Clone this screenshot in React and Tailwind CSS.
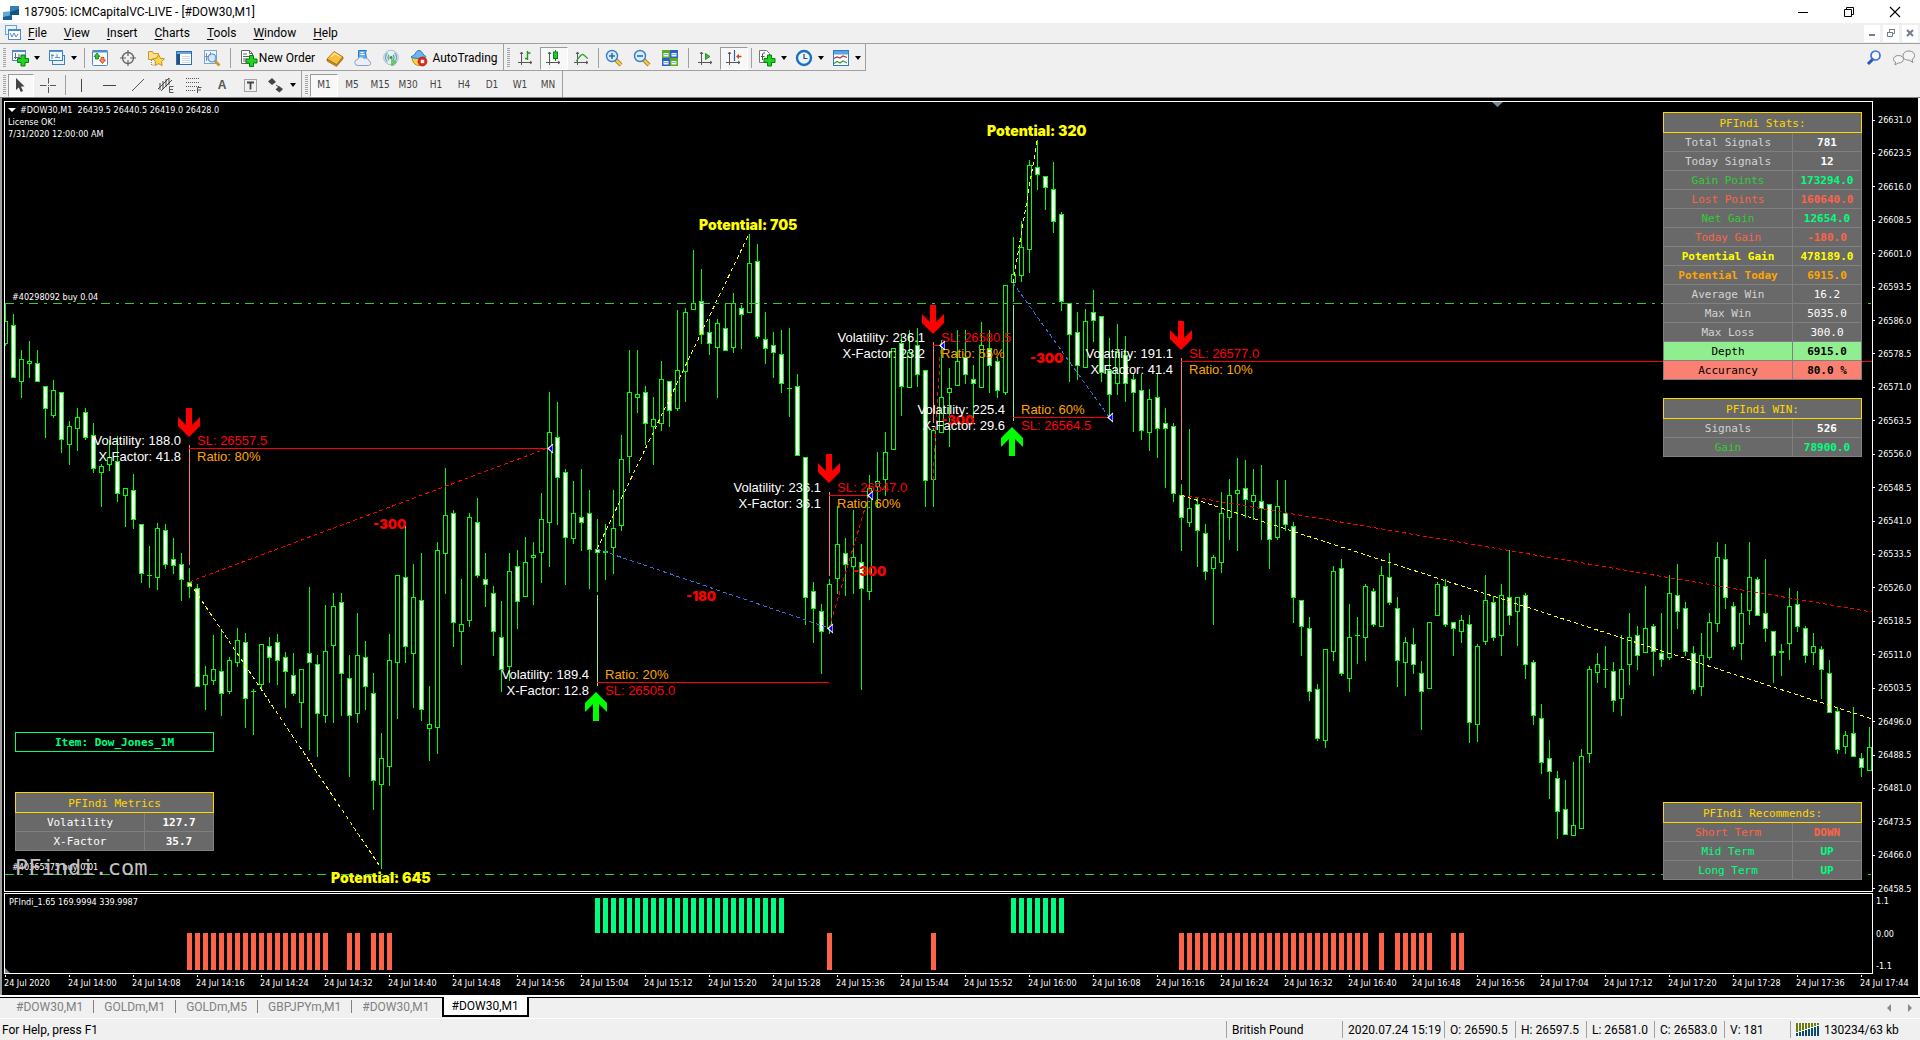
import React from 'react';

/* ---------- market data: [filled, high, bodyTop, bodyBottom, low] in plot rows ---------- */

const FIRST_X = 5;
const STEP = 8;

const CANDLES = [
  [0,303,321,344,346],[1,314,325,378,378],[0,350,359,382,398],[0,341,361,364,378],[1,350,363,382,382],
  [1,386,386,409,438],[0,380,390,416,418],[1,392,392,440,453],[0,421,426,445,465],[0,408,417,429,451],
  [1,408,412,438,440],[1,423,435,469,473],[0,464,466,473,507],[0,440,457,465,471],[1,436,461,494,502],
  [0,488,488,496,527],[1,474,490,520,529],[1,524,524,574,583],[0,546,575,575,587],[0,523,528,578,590],
  [1,524,530,565,569],[1,538,559,566,574],[1,553,564,580,601],[1,568,582,587,598],[1,584,588,687,687],
  [0,666,675,685,710],[0,635,669,681,685],[1,630,671,694,716],[0,657,660,692,694],[0,628,640,663,667],
  [1,633,642,699,728],[0,689,691,691,734],[0,644,644,685,690],[1,637,646,658,683],[1,634,642,661,685],
  [1,652,657,672,708],[1,653,675,694,696],[0,669,669,703,728],[1,587,653,663,750],[1,655,664,714,757],
  [0,605,651,716,723],[0,593,606,646,723],[1,593,602,674,716],[1,655,678,716,777],[0,613,655,714,723],
  [1,641,657,687,710],[1,673,693,781,810],[0,733,758,785,869],[0,634,660,767,786],[0,575,575,663,719],
  [1,526,577,647,663],[0,564,597,654,708],[1,553,600,710,721],[0,686,724,729,761],[0,542,550,728,754],
  [0,468,515,554,594],[1,510,513,623,647],[0,579,624,632,665],[0,513,517,621,627],[1,498,522,576,578],
  [1,553,579,585,607],[1,586,593,632,656],[1,601,637,670,692],[0,553,571,667,681],[1,550,566,602,629],
  [0,537,562,597,597],[0,542,555,558,605],[0,493,519,553,583],[0,392,432,523,567],[1,402,437,478,525],
  [1,469,472,538,585],[0,481,513,539,544],[1,469,517,523,551],[1,490,513,550,589],[1,519,549,553,592],
  [1,524,551,553,580],[0,490,528,548,574],[0,435,459,526,531],[0,350,392,457,473],[0,350,394,398,413],
  [1,386,392,424,445],[0,397,419,427,465],[0,361,379,424,431],[1,381,381,411,427],[0,310,370,409,411],
  [0,308,312,372,402],[0,250,303,310,310],[1,269,301,335,344],[1,319,332,344,355],[0,319,323,348,398],
  [1,303,328,351,351],[0,293,303,348,353],[1,305,308,315,349],[0,234,263,313,313],[1,244,261,337,339],
  [1,312,339,349,364],[1,332,345,353,378],[1,330,354,384,393],[0,328,388,388,416],[1,374,386,456,456],
  [1,457,457,598,625],[1,582,591,609,643],[1,604,611,632,674],[0,579,584,629,634],[0,506,544,579,594],
  [1,538,553,565,596],[0,510,557,567,594],[1,544,562,589,690],[0,475,488,592,600],[0,452,481,487,508],
  [0,432,452,480,496],[0,348,348,450,450],[1,335,343,387,416],[0,330,352,388,388],[1,328,345,375,387],
  [1,370,370,481,507],[0,428,430,480,507],[0,340,397,433,433],[0,368,388,393,447],[0,330,361,386,386],
  [1,330,357,375,384],[1,365,379,384,418],[0,322,345,388,388],[1,330,348,366,393],[1,357,361,391,398],
  [0,285,285,393,395],[0,237,274,283,302],[0,221,247,276,282],[0,160,165,250,273],[1,140,167,175,190],
  [1,176,176,188,210],[1,162,189,222,233],[1,212,214,302,311],[1,303,303,335,382],[1,312,332,366,380],
  [0,309,321,368,368],[1,290,312,321,342],[1,316,316,373,382],[1,338,370,395,417],[0,324,352,384,395],
  [1,336,355,384,402],[1,373,379,393,432],[1,374,390,431,440],[0,389,399,433,451],[1,373,397,429,458],
  [1,408,423,429,488],[1,423,426,494,502],[1,484,495,518,551],[0,429,508,523,527],[1,498,504,531,567],
  [1,524,533,572,580],[0,555,557,569,625],[0,492,513,563,573],[0,479,495,518,540],[0,458,490,494,551],
  [1,460,488,500,518],[0,469,495,502,520],[1,465,501,509,540],[1,504,504,540,569],[0,480,506,538,540],
  [1,480,513,525,531],[1,522,526,598,623],[1,600,600,627,656],[1,617,628,692,701],[1,684,689,739,741],
  [0,649,649,741,748],[0,566,571,652,661],[1,559,568,674,676],[0,604,637,679,692],[0,617,635,635,663],
  [0,584,586,638,661],[1,588,591,625,627],[0,566,575,627,627],[1,553,577,603,605],[1,597,608,661,687],
  [0,637,642,663,696],[1,628,644,665,674],[1,661,673,692,730],[0,622,622,689,689],[0,582,584,616,616],
  [1,579,586,625,627],[1,622,622,629,656],[0,615,620,632,643],[1,615,624,723,743],[0,644,646,725,742],
  [0,575,600,642,645],[1,596,602,638,641],[0,584,595,636,656],[1,550,597,616,625],[0,597,597,612,646],
  [1,593,595,665,679],[1,660,662,716,725],[1,704,718,763,774],[1,740,758,772,799],[1,771,778,812,839],
  [1,780,809,835,835],[0,762,825,836,836],[0,749,756,829,829],[0,666,669,754,763],[0,653,664,673,683],
  [0,646,669,669,687],[1,662,671,701,712],[0,635,669,699,716],[0,613,637,665,685],[1,626,635,656,670],
  [0,586,628,653,653],[1,624,626,652,676],[1,613,653,660,667],[0,575,593,658,660],[1,564,595,612,629],
  [1,602,608,652,656],[1,646,653,690,694],[0,633,655,687,696],[0,613,622,658,660],[0,542,557,624,632],
  [1,544,559,598,609],[1,602,606,647,650],[0,593,613,644,660],[0,542,577,611,625],[1,577,579,616,616],
  [1,559,613,629,642],[1,631,631,656,683],[0,644,651,653,676],[0,588,606,644,660],[1,591,604,627,632],
  [1,626,628,656,663],[0,633,646,653,665],[1,646,649,670,699],[1,660,673,713,713],[1,707,711,750,754],
  [0,731,735,747,754],[1,707,733,757,757],[1,753,758,768,777],[0,727,747,771,771],
];

const BUY_RUNS = [[74, 97], [126, 132]];
const SELL_RUNS = [[23, 40], [43, 44], [46, 48], [103, 103], [116, 116], [147, 170], [172, 172], [174, 178], [181, 182]];

const SIGNALS = [
  { x: 189, top: 445, vol: '188.0', xf: '41.8', sl: '26557.5', ratio: '80%', stem: [445, 565], to: 548, line: 448, arrow: 408 },
  { x: 829, top: 492, vol: '236.1', xf: '36.1', sl: '26547.0', ratio: '60%', stem: [492, 576], to: 868, line: 495, arrow: 454 },
  { x: 933, top: 342, vol: '236.1', xf: '23.2', sl: '26580.5', ratio: '55%', stem: [342, 423], to: 940, line: 345, arrow: 305 },
  { x: 1181, top: 358, vol: '191.1', xf: '41.4', sl: '26577.0', ratio: '10%', stem: [358, 480], to: 1872, line: 361, arrow: 321 },
  { x: 1013, top: 414, vol: '225.4', xf: '29.6', sl: '26564.5', ratio: '60%', stem: [305, 421], to: 1109, line: 417, arrow: 427, up: true },
  { x: 597, top: 679, vol: '189.4', xf: '12.8', sl: '26505.0', ratio: '20%', stem: [595, 686], to: 829, line: 682, arrow: 692, up: true },
];

const TRENDS = [
  [189, 582, 548, 448, '#ff0000'],
  [190, 583, 381, 868, '#ffff00'],
  [597, 549, 749, 234, '#ffff00'],
  [597, 549, 829, 628, '#4169e1'],
  [829, 628, 869, 495, '#ff0000'],
  [933, 480, 941, 340, '#ff0000'],
  [1013, 283, 1037, 141, '#ffff00'],
  [1013, 283, 1109, 417, '#4169e1'],
  [1181, 495, 1872, 612, '#ff0000'],
  [1181, 495, 1872, 719, '#ffff00'],
];

const EXITS = [[548, 448], [868, 495], [940, 345], [1108, 417], [828, 628]];
const RESULTS = [[373, 529, '-300'], [686, 601, '-180'], [853, 576, '-300'], [941, 425, '-300'], [1030, 363, '-300']];
const POTENTIALS = [[699, 230, 'Potential: 705'], [987, 136, 'Potential: 320'], [331, 883, 'Potential: 645']];

const PRICES = Array.from({ length: 24 }, (_, i) => (26631 - i * 7.5).toFixed(1));
const TIMES = Array.from({ length: 30 }, (_, i) => {
  if (i === 0) return '24 Jul 2020';
  const m = 840 + (i - 1) * 8;
  return '24 Jul ' + Math.floor(m / 60) + ':' + String(m % 60).padStart(2, '0');
});

const PLAIN = 'text-[#d3d3d3]';
const STATS = [
  ['Total Signals', '781', PLAIN, 'text-white font-bold'],
  ['Today Signals', '12', PLAIN, 'text-white font-bold'],
  ['Gain Points', '173294.0', 'text-[#32cd32]', 'text-[#00ff7f] font-bold'],
  ['Lost Points', '160640.0', 'text-[#ff6347]', 'text-[#ff6347] font-bold'],
  ['Net Gain', '12654.0', 'text-[#32cd32]', 'text-[#00ff7f] font-bold'],
  ['Today Gain', '-180.0', 'text-[#ff6347]', 'text-[#ff6347] font-bold'],
  ['Potential Gain', '478189.0', 'text-[#ffff00] font-bold', 'text-[#ffff00] font-bold'],
  ['Potential Today', '6915.0', 'text-[#ffa500] font-bold', 'text-[#ffa500] font-bold'],
  ['Average Win', '16.2', PLAIN, 'text-white'],
  ['Max Win', '5035.0', PLAIN, 'text-white'],
  ['Max Loss', '300.0', PLAIN, 'text-white'],
  ['Depth', '6915.0', 'bg-[#90ee90] text-black', 'bg-[#90ee90] text-black font-bold'],
  ['Accurancy', '80.0 %', 'bg-[#fa8072] text-black', 'bg-[#fa8072] text-black font-bold'],
];
const WIN = [
  ['Signals', '526', PLAIN, 'text-white font-bold'],
  ['Gain', '78900.0', 'text-[#32cd32]', 'text-[#00ff7f] font-bold'],
];
const RECOMMENDS = [
  ['Short Term', 'DOWN', 'text-[#ff6347]', 'text-[#ff6347] font-bold'],
  ['Mid Term', 'UP', 'text-[#00ff7f]', 'text-[#00ff7f] font-bold'],
  ['Long Term', 'UP', 'text-[#00ff7f]', 'text-[#00ff7f] font-bold'],
];
const METRICS = [
  ['Volatility', '127.7', 'text-white', 'text-white font-bold'],
  ['X-Factor', '35.7', 'text-white', 'text-white font-bold'],
];

/* ---------- icons ---------- */

const Icon = ({ w = 18, h = 18, children }) => (
  <svg width={w} height={h} viewBox={`0 0 ${w} ${h}`} className="shrink-0" aria-hidden="true">{children}</svg>
);

const Plus = ({ x, y }) => (
  <path transform={`translate(${x} ${y})`} d="M4 0.5h4v3.5h3.5v4H8v3.5H4V8H0.5V4H4z" fill="#22d422" stroke="#0a7d0a" />
);

const Axes = () => (
  <path d="M4.5 3v13M1 13.5h14M3 5l1.5-2L6 5M13 12l2 1.5L13 15" fill="none" stroke="#555" />
);

const Lens = ({ minus }) => (
  <>
    <path d="M10.5 10.5l5.5 5.5" stroke="#a87f10" strokeWidth="4" />
    <path d="M10.5 10.5l5.5 5.5" stroke="#f2cf4a" strokeWidth="2.4" />
    <circle cx="7" cy="7" r="5.5" fill="#d6ecfb" stroke="#3a7cc0" strokeWidth="1.4" />
    <path d={minus ? 'M4 7h6' : 'M4 7h6M7 4v6'} stroke="#2f6fb4" strokeWidth="1.6" />
  </>
);

const NewChartIcon = () => (
  <Icon>
    <rect x="1.5" y="1.5" width="13" height="10" fill="#f4f9fe" stroke="#4d8ccc" />
    <path d="M1 2.5h14" stroke="#4d8ccc" />
    <path d="M4.5 4v6M3 8.5h6M8 5v3" stroke="#6b6b6b" fill="none" />
    <Plus x={6} y={5.5} />
  </Icon>
);
const ProfilesIcon = () => (
  <Icon>
    <rect x="4.5" y="6.5" width="12" height="9" fill="#e8f2fc" stroke="#3f7fc4" />
    <rect x="1.5" y="1.5" width="13" height="10" fill="#f4f9fe" stroke="#3f7fc4" />
    <path d="M1 2.5h14M4 5v5M3 6.5h3M9 5v4M7 8.5h5" stroke="#5b93cf" fill="none" />
  </Icon>
);
const MarketWatchIcon = () => (
  <Icon>
    <rect x="1.5" y="1.5" width="15" height="15" rx="1" fill="#fff" stroke="#4d8ccc" />
    <path d="M1.5 2.5h15" stroke="#4d8ccc" strokeWidth="2" />
    <path d="M6 4l3 3.5H7.5V10H4.5V7.5H3z" fill="#35c435" stroke="#0f7d0f" strokeWidth=".8" />
    <path d="M11.5 14.5l3-3.5H13V8.5h-3V11H8.5z" fill="#ff8a4a" stroke="#c43a10" strokeWidth=".8" />
  </Icon>
);
const DataWindowIcon = () => (
  <Icon>
    <circle cx="9" cy="9" r="5.5" fill="none" stroke="#666" strokeWidth="1.4" />
    <path d="M9 1v6M9 11v6M1 9h6M11 9h6" stroke="#666" strokeWidth="1.2" />
  </Icon>
);
const NavigatorIcon = () => (
  <Icon>
    <path d="M1.5 2.5h4l1 2h5v6h-10z" fill="#fbe08a" stroke="#c39a24" />
    <path d="M4.5 11v5h3" stroke="#888" strokeDasharray="1 1" fill="none" />
    <path d="M11.5 5.5l1.9 3.7 4 .6-2.9 2.8.7 4-3.7-1.9-3.6 1.9.7-4L5.7 9.8l4-.6z" fill="#ffd84a" stroke="#b98a12" strokeWidth=".9" />
  </Icon>
);
const TerminalIcon = () => (
  <Icon>
    <rect x="1.5" y="2.5" width="15" height="13" fill="#fff" stroke="#2d6db5" />
    <path d="M2 3h14v2H2z" fill="#6da6df" />
    <path d="M2 5h3v10H2z" fill="#244f80" />
    <path d="M7 7.5h8M7 9.5h8M7 11.5h8M7 13.5h8" stroke="#c4d9ee" />
  </Icon>
);
const TesterIcon = () => (
  <Icon>
    <rect x="1.5" y="1.5" width="12" height="13" fill="#eef5fc" stroke="#7da6d3" />
    <path d="M3.5 4v8M7.5 3v5M11.5 5v7M2 7.5h4" stroke="#7b93ad" />
    <path d="M12 12l4.5 4.5" stroke="#c99a1e" strokeWidth="2.6" />
    <circle cx="9" cy="9" r="4" fill="#cfe6fa" fillOpacity=".85" stroke="#5a8fc8" strokeWidth="1.2" />
  </Icon>
);
const NewOrderIcon = () => (
  <Icon>
    <path d="M1.5 1.5h8l3 3v10h-11z" fill="#fff" stroke="#666" />
    <path d="M9.5 1.5v3h3M3 5h4M3 7.5h6M3 10h4M3 12h3" stroke="#666" fill="none" />
    <Plus x={5.5} y={6} />
  </Icon>
);
const BookIcon = () => (
  <Icon>
    <path d="M1 10L8 2.5l9 5.5-6.500 8z" fill="#f3bf3c" stroke="#b97a12" />
    <path d="M1 10v2l9.5 5.5L17 10V8l-6.5 7.5z" fill="#c98a1a" stroke="#96600a" strokeWidth=".6" />
    <path d="M5 8l3.5-3.5 5 3" stroke="#fde59b" strokeWidth="1.4" fill="none" />
  </Icon>
);
const CloudIcon = () => (
  <Icon>
    <path d="M4.5 1.5h8l-1 2 1 6h-8z" fill="#5fb0f2" stroke="#2478c8" />
    <path d="M6.5 3.5h3M6.5 5.5h4" stroke="#fff" />
    <path d="M4 16.5a3 3 0 01-.4-6A3.5 3.5 0 0110 9.5a3.5 3.5 0 015 2.5 2.3 2.3 0 01-.5 4.5z" fill="#e9eef8" stroke="#8fa0c4" />
  </Icon>
);
const SignalIcon = () => (
  <Icon>
    <circle cx="9" cy="8.5" r="7.3" fill="#e4f0f4" stroke="#a5bfd0" />
    <path d="M5.5 13a6 6 0 010-9M12.5 13a6 6 0 000-9" fill="none" stroke="#6f9fd0" strokeWidth="1.3" />
    <path d="M7 11a3.5 3.5 0 010-5M11 11a3.5 3.5 0 000-5" fill="none" stroke="#57a86a" strokeWidth="1.2" />
    <circle cx="9" cy="8.5" r="1.6" fill="#3c8f4c" />
    <path d="M9 9v8h2a8 8 0 004-4z" fill="#4fbf56" fillOpacity=".8" />
  </Icon>
);
const AutoTradingIcon = () => (
  <Icon>
    <path d="M2 8c0 5 3 8.5 7 8.5s6-3.5 6-8.5z" fill="#f7cf4c" stroke="#b98918" />
    <path d="M1 8c2-2 3-1 4-3s2-3.5 4-3.5S12 3 13 5s2 1 3 2.5C13 10 4 10 1 8z" fill="#6cb7ea" stroke="#2a7bb8" />
    <circle cx="12.5" cy="12.5" r="4.5" fill="#e02a1b" stroke="#9c140a" strokeWidth=".6" />
    <rect x="10.8" y="10.8" width="3.4" height="3.4" fill="#fff" />
  </Icon>
);
const BarsIcon = () => (
  <Icon><Axes /><path d="M10.5 2v9M8 9.5h2.5M10.5 4h3" stroke="#1e9a1e" strokeWidth="1.4" /></Icon>
);
const CandleIcon = () => (
  <Icon><Axes /><path d="M10.5 1v11" stroke="#0b8a1b" /><rect x="8.5" y="3" width="4" height="6.5" fill="#22c63a" stroke="#0b8a1b" /></Icon>
);
const LineIcon = () => (
  <Icon><Axes /><path d="M3 12c2-1 4-7 7-6.5 2 .5 2.5 3 5 4" fill="none" stroke="#3aa83a" strokeWidth="1.3" /></Icon>
);
const TileIcon = () => (
  <Icon>
    <path d="M1 1h8v8H1z" fill="#5aad1e" /><path d="M9 1h8v8H9z" fill="#2a62c9" />
    <path d="M1 9h8v8H1z" fill="#2a62c9" /><path d="M9 9h8v8H9z" fill="#5aad1e" />
    <path d="M2.5 4h5v3.5h-5zM10.5 4h5v3.5h-5zM2.5 12h5v3.5h-5zM10.5 12h5v3.5h-5z" fill="#eef5ff" />
    <path d="M3 5.5h4M11 5.5h4M3 13.5h4M11 13.5h4" stroke="#8ab0d8" />
  </Icon>
);
const ScrollIcon = () => (
  <Icon><Axes /><path d="M8.5 4.5v6l4.500-3z" fill="#35c435" stroke="#13801f" strokeWidth=".8" /></Icon>
);
const ShiftIcon = () => (
  <Icon><Axes /><path d="M9.5 1v11" stroke="#2a5fa8" strokeWidth="1.2" /><path d="M11 7.5l3-2.5v1.800h2.500v1.400H14V10z" fill="#d0461a" /></Icon>
);
const IndicatorIcon = () => (
  <Icon>
    <path d="M1.5 1.5h7l3 3v9h-10z" fill="#fff" stroke="#777" />
    <path d="M7 4c-2-.5-2.5.5-2.5 2v5M3 7.500h3.500" stroke="#555" fill="none" />
    <Plus x={5.5} y={5.5} />
  </Icon>
);
const ClockIcon = () => (
  <Icon>
    <circle cx="9" cy="9" r="7" fill="#e9f4fe" stroke="#1e6fc4" strokeWidth="2.4" />
    <path d="M9 5v4.500h3.500" fill="none" stroke="#444" strokeWidth="1.2" />
  </Icon>
);
const TemplateIcon = () => (
  <Icon>
    <rect x="1.5" y="1.5" width="15" height="15" fill="#fff" stroke="#2d7cc6" />
    <path d="M2 2h14v3.500H2z" fill="#5ba3e2" />
    <path d="M2 9.500l3-1.500 3 1 3-2 4 1.500" fill="none" stroke="#a83820" strokeWidth="1.2" />
    <path d="M2 14.500l3-2 3 1.500 3-2 4 2" fill="none" stroke="#2e9a3e" strokeWidth="1.2" />
  </Icon>
);
const CursorIcon = () => (
  <Icon><path d="M4 2v12l2.800-2.600 2 4.600 2.200-1-2-4.400h3.600z" fill="#444" /></Icon>
);
const CrossIcon = () => (
  <Icon><path d="M9.500 2v5.500M9.500 11v6M1 9.500h6.500M11 9.500h6M9 9.500h1" stroke="#555" /></Icon>
);
const ChannelIcon = () => (
  <Icon>
    <path d="M1 13L12 2M4 15L15 4M3 7v7M6 5v8M9 3v8M12 2v7" stroke="#444" fill="none" />
    <path d="M16.500 10.500h-4v6h4M12.500 13.500h3.500" stroke="#555" fill="none" />
  </Icon>
);
const FiboIcon = () => (
  <Icon>
    <path d="M1 2.500h14M1 6.500h14M1 10.500h14M1 14.500h9" stroke="#555" strokeDasharray="1 1" />
    <path d="M16.500 11.500h-4v5.500M12.500 14h3.500" stroke="#555" fill="none" />
  </Icon>
);
const LabelIcon = () => (
  <Icon>
    <rect x="3.500" y="3.500" width="12" height="12" fill="none" stroke="#555" strokeDasharray="1 1" />
    <path d="M6 6.500h7M9.500 6.500v7" stroke="#444" strokeWidth="1.8" />
  </Icon>
);
const ShapesIcon = () => (
  <Icon>
    <path d="M5 2l4 4-4 3-4-3.500zM12 10l4 3-3.500 3.500-4-3z" fill="#444" />
    <path d="M9 9l3 2" stroke="#444" />
  </Icon>
);
const SearchIcon = () => (
  <Icon>
    <path d="M7 10l-5 5" stroke="#2456c4" strokeWidth="3" />
    <circle cx="9.500" cy="6.500" r="4.500" fill="#f4f8ff" stroke="#3c6fd8" strokeWidth="1.7" />
  </Icon>
);
const ChatIcon = () => (
  <Icon w={24}>
    <path d="M11 7c0-3 2.500-5 6-5s5.500 2 5.500 4.500c0 2-1 3.200-2.500 4l1 3-4-2.500c-4 .2-6-1.500-6-4z" fill="#f4f4f4" stroke="#8a8a8a" />
    <path d="M1.500 10.500c0-2.300 2.200-4 5-4s5 1.700 5 3.800-2.200 3.700-5 3.700H6l-3 2 .5-3c-1.300-.6-2-1.500-2-2.500z" fill="#f6f6f6" stroke="#8a8a8a" />
  </Icon>
);
const AppIcon = () => (
  <Icon w={20}>
    <path d="M1 9h9v8H1z" fill="#1d5f92" /><path d="M1 9l9-1v4l-9 2z" fill="#62a8d8" />
    <path d="M8 3h9v9H8z" fill="#17537f" /><path d="M8 3h9v3l-9 3z" fill="#2f82b8" />
  </Icon>
);
const ChartDocIcon = () => (
  <Icon>
    <rect x="1.500" y="1.500" width="11" height="9" fill="#e9f3fd" stroke="#6aa3dc" />
    <rect x="4.500" y="5.500" width="12" height="10" fill="#fff" stroke="#4d8ccc" />
    <path d="M4.500 6.500h12" stroke="#4d8ccc" />
    <path d="M6 9l2 4 2-4 2 4 2-3" fill="none" stroke="#4d8ccc" />
  </Icon>
);

/* ---------- chrome ---------- */

const Caret = () => (
  <svg width="6" height="4" viewBox="0 0 6 4" className="ml-[5px] shrink-0" aria-hidden="true"><path d="M0 0h6L3 4z" fill="#000" /></svg>
);
const Grip = () => (
  <div className="flex w-2 shrink-0 items-center justify-center" aria-hidden="true">
    <div className="h-5 w-[3px] bg-[repeating-linear-gradient(to_bottom,#a5a5a5_0px,#a5a5a5_1px,#f0f0f0_1px,#f0f0f0_2px)]" />
  </div>
);
const Sep = ({ width = 'w-1' }) => (
  <div className={`flex shrink-0 items-center justify-center ${width}`} aria-hidden="true">
    <div className="h-5 w-px bg-[#a0a0a0]" />
  </div>
);
const Tool = ({ label, pressed, children, width = 'w-7' }) => (
  <button
    type="button"
    aria-label={label}
    aria-pressed={pressed ? true : undefined}
    className={`flex h-[23px] shrink-0 items-center justify-center ${width} ${pressed ? 'border border-r-white border-b-white border-l-[#9a9a9a] border-t-[#9a9a9a] bg-[#f8f8f8]' : ''}`}
  >
    {children}
  </button>
);

const MENUS = ['File', 'View', 'Insert', 'Charts', 'Tools', 'Window', 'Help'];
const FRAMES = ['M1', 'M5', 'M15', 'M30', 'H1', 'H4', 'D1', 'W1', 'MN'];

function TitleBar() {
  return (
    <header className="flex h-[23px] shrink-0 items-center bg-white pl-0.5">
      <AppIcon />
      <h1 className="ml-0.5 text-[12px] leading-4 whitespace-nowrap">187905: ICMCapitalVC-LIVE - [#DOW30,M1]</h1>
      <div className="mr-0.5 ml-auto flex">
        <button type="button" aria-label="Minimize" className="flex h-5 w-[46px] items-center justify-center">
          <Icon w={12} h={12}><path d="M1 6.500h10" stroke="#000" /></Icon>
        </button>
        <button type="button" aria-label="Restore" className="flex h-5 w-[46px] items-center justify-center">
          <Icon w={12} h={12}><path d="M1.500 3.500h7v7h-7zM3.500 3.500v-2h7v7h-2" fill="none" stroke="#000" /></Icon>
        </button>
        <button type="button" aria-label="Close" className="flex h-5 w-[46px] items-center justify-center">
          <Icon w={12} h={12}><path d="M1 1l10 10M11 1L1 11" stroke="#000" strokeWidth="1.1" /></Icon>
        </button>
      </div>
    </header>
  );
}

function MenuBar() {
  return (
    <nav className="flex h-[21px] shrink-0 items-center border-b border-[#a0a0a0] pl-1">
      <ChartDocIcon />
      <div className="ml-1.5 flex gap-[17px]">
        {MENUS.map((m) => (
          <button key={m} type="button" className="text-[12px] leading-4">
            <span className="underline underline-offset-2">{m[0]}</span>{m.slice(1)}
          </button>
        ))}
      </div>
      <div className="mr-0.5 ml-auto flex gap-[3px]">
        <button type="button" aria-label="Minimize chart" className="flex h-[17px] w-4 items-center justify-center bg-white">
          <Icon w={10} h={10}><path d="M2 7h6" stroke="#6f7f8f" strokeWidth="2" /></Icon>
        </button>
        <button type="button" aria-label="Restore chart" className="flex h-[17px] w-4 items-center justify-center bg-white">
          <Icon w={10} h={10}><path d="M1.500 4.500h5v4h-5zM3.500 4V1.500h5v4H7M1 4.500h6M3 1.500h6" fill="none" stroke="#6f7f8f" /></Icon>
        </button>
        <button type="button" aria-label="Close chart" className="flex h-[17px] w-4 items-center justify-center bg-white">
          <Icon w={10} h={10}><path d="M2 2l6 6M8 2L2 8" stroke="#6f7f8f" strokeWidth="2" /></Icon>
        </button>
      </div>
    </nav>
  );
}

function MainToolbar() {
  return (
    <div className="flex h-[27px] shrink-0 items-center justify-between">
      <div className="flex h-full border-b border-[#a0a0a0]">
        <div className="flex items-center border-r border-[#a0a0a0] pt-0.5">
          <Grip />
          <Tool label="New chart" width="w-[34px]"><NewChartIcon /><Caret /></Tool>
          <Tool label="Profiles" width="w-10"><ProfilesIcon /><Caret /></Tool>
          <Sep />
          <Tool label="Market Watch"><MarketWatchIcon /></Tool>
          <Tool label="Data Window"><DataWindowIcon /></Tool>
          <Tool label="Navigator"><NavigatorIcon /></Tool>
          <Tool label="Terminal"><TerminalIcon /></Tool>
          <Tool label="Strategy Tester"><TesterIcon /></Tool>
          <Sep width="w-2" />
          <Tool width="w-[87px]"><NewOrderIcon /><span className="ml-px text-[12px] leading-4 whitespace-nowrap">New Order</span></Tool>
          <Tool label="MetaEditor"><BookIcon /></Tool>
          <Tool label="Virtual hosting"><CloudIcon /></Tool>
          <Tool label="Signals"><SignalIcon /></Tool>
          <Tool width="w-[98px]"><AutoTradingIcon /><span className="ml-1 text-[12px] leading-4 whitespace-nowrap">AutoTrading</span></Tool>
        </div>
        <div className="flex items-center border-r border-[#a0a0a0] pt-0.5">
          <Grip />
          <Tool label="Bar chart"><BarsIcon /></Tool>
          <Tool label="Candlesticks" pressed><CandleIcon /></Tool>
          <Tool label="Line chart"><LineIcon /></Tool>
          <Sep />
          <Tool label="Zoom in"><Icon><Lens /></Icon></Tool>
          <Tool label="Zoom out"><Icon><Lens minus /></Icon></Tool>
          <Tool label="Tile windows"><TileIcon /></Tool>
          <Sep width="w-2" />
          <Tool label="Auto scroll"><ScrollIcon /></Tool>
          <Tool label="Chart shift" pressed><ShiftIcon /></Tool>
          <Sep width="w-1.5" />
          <Tool label="Indicators" width="w-[37px]"><IndicatorIcon /><Caret /></Tool>
          <Tool label="Periods" width="w-[37px]"><ClockIcon /><Caret /></Tool>
          <Tool label="Templates" width="w-[37px]"><TemplateIcon /><Caret /></Tool>
        </div>
      </div>
      <div className="mr-1 flex gap-2">
        <button type="button" aria-label="Search"><SearchIcon /></button>
        <button type="button" aria-label="Chat"><ChatIcon /></button>
      </div>
    </div>
  );
}

function DrawingToolbar() {
  return (
    <div className="flex h-[27px] shrink-0 border-b border-[#808080]">
      <div className="flex items-center border-r border-[#a0a0a0] pt-0.5 pr-[3px]">
        <Grip />
        <Tool label="Cursor" pressed width="w-[26px]"><CursorIcon /></Tool>
        <Tool label="Crosshair"><CrossIcon /></Tool>
        <Sep width="w-1.5" />
        <Tool label="Vertical line"><Icon><path d="M8.500 3v13" stroke="#444" /></Icon></Tool>
        <Tool label="Horizontal line"><Icon><path d="M2 9.500h13" stroke="#444" /></Icon></Tool>
        <Tool label="Trendline"><Icon><path d="M3 15L15 3" stroke="#555" /></Icon></Tool>
        <Tool label="Equidistant channel"><ChannelIcon /></Tool>
        <Tool label="Fibonacci retracement"><FiboIcon /></Tool>
        <Tool><span className="font-['Liberation_Sans'] text-[12px] leading-4 font-bold text-[#555]">A</span></Tool>
        <Tool label="Text label"><LabelIcon /></Tool>
        <Tool label="Arrows" width="w-[34px]"><ShapesIcon /><Caret /></Tool>
      </div>
      <div className="flex items-center border-r border-[#a0a0a0] pt-0.5">
        <Grip />
        {FRAMES.map((f) => (
          <Tool key={f} pressed={f === 'M1'}><span className="font-['DejaVu_Sans_Condensed','Roboto',sans-serif] text-[10px] leading-4 text-[#444]">{f}</span></Tool>
        ))}
      </div>
    </div>
  );
}

/* ---------- chart ---------- */

const Candle = ({ x, c: [filled, high, top, bottom, low] }) =>
  top === bottom ? (
    <path d={`M${x}.5 ${high}V${low + 1}M${x - 2} ${top}.5h5`} stroke="#00ff00" />
  ) : (
    <g stroke="#00ff00">
      <path d={`M${x}.5 ${high}V${top}M${x}.5 ${bottom}V${low}`} />
      <rect x={x - 2 + 0.5} y={top + 0.5} width="4" height={Math.max(bottom - top - 1, 1)} fill={filled ? '#fff' : '#000'} />
    </g>
  );

const Arrow = ({ x, y, up }) => (
  <path
    transform={up ? `translate(${x - 1} ${y + 29}) scale(1 -1)` : `translate(${x} ${y})`}
    d="M-3 0h6v17l8-8v9L0 29l-11-11V9l8 8z"
    fill={up ? '#00ff00' : '#ff0000'}
  />
);

const Signal = ({ s }) => (
  <g className="font-['Liberation_Sans'] text-[13px]">
    <path d={`M${s.x}.5 ${s.stem[0]}V${s.stem[1]}`} stroke={s.up ? '#90ee90' : '#f08080'} />
    <path d={`M${s.x} ${s.line}.5H${s.to}`} stroke="#ff0000" />
    <Arrow x={s.x} y={s.arrow} up={s.up} />
    <g fill="#fff" textAnchor="end">
      <text x={s.x - 8} y={s.top}>Volatility: {s.vol}</text>
      <text x={s.x - 8} y={s.top + 16}>X-Factor: {s.xf}</text>
    </g>
    <text x={s.x + 8} y={s.up ? s.top + 16 : s.top} fill="#ff0010">SL: {s.sl}</text>
    <text x={s.x + 8} y={s.up ? s.top : s.top + 16} fill="#ffa500">Ratio: {s.ratio}</text>
  </g>
);

function PricePlot() {
  return (
    <svg className="absolute inset-0 h-full w-full" role="img" aria-label="#DOW30 one minute candlestick chart">
      <g transform="translate(-5 -102)">
        {CANDLES.map((c, i) => <Candle key={i} x={FIRST_X + i * STEP} c={c} />)}
        <g stroke="#32cd32" strokeDasharray="9 6 3 6">
          <path d="M5 303.500H1872" />
          <path d="M5 874.500H1872" />
        </g>
        {TRENDS.map(([x1, y1, x2, y2, color]) => (
          <path key={`${x1}-${x2}-${color}`} d={`M${x1} ${y1}L${x2} ${y2}`} stroke={color} strokeDasharray="4 3" shapeRendering="crispEdges" />
        ))}
        <g className="font-['Inter'] text-[13px] font-black" fill="#ff0000">
          {RESULTS.map(([x, y, t]) => <text key={x} x={x} y={y}>{t}</text>)}
        </g>
        {SIGNALS.map((s) => <Signal key={s.x} s={s} />)}
        {EXITS.map(([x, y]) => (
          <g key={x}>
            <path d={`M${x - 1} ${y + 0.5}l6-5v10z`} fill="#fff" />
            <path d={`M${x + 1} ${y + 0.5}l3.500-3.500v7z`} fill="#0000ff" />
          </g>
        ))}
        <g className="font-['Inter'] text-[14px] font-black" fill="#ffff00">
          {POTENTIALS.map(([x, y, t]) => <text key={x} x={x} y={y}>{t}</text>)}
        </g>
        <path d="M1492 102h11l-5.500 5z" fill="#778899" />
      </g>
    </svg>
  );
}

function Bars({ runs, y, h, color }) {
  return runs.map(([a, b]) =>
    Array.from({ length: b - a + 1 }, (_, k) => (
      <rect key={a + k} x={FIRST_X + (a + k) * STEP - 2} y={y} width="5" height={h} fill={color} />
    ))
  );
}

function DataPanel({ title, rows }) {
  return (
    <table className="w-[199px] table-fixed border-collapse bg-[#696969] text-center font-['DejaVu_Sans_Mono'] text-[11px] leading-4">
      <colgroup><col className="w-[129px]" /><col /></colgroup>
      <thead>
        <tr>
          <th colSpan={2} className="h-5 border border-[#ffd700] p-0 pt-0.5 font-normal text-[#ffd700]">{title}</th>
        </tr>
      </thead>
      <tbody>
        {rows.map(([k, v, kc, vc]) => (
          <tr key={k}>
            <th scope="row" className={`h-[19px] border border-t-0 border-[#808080] p-0 pt-0.5 ${kc.includes('font-bold') ? '' : 'font-normal'} ${kc}`}>{k}</th>
            <td className={`h-[19px] border border-t-0 border-[#808080] p-0 pt-0.5 ${vc}`}>{v}</td>
          </tr>
        ))}
      </tbody>
    </table>
  );
}

function Chart() {
  return (
    <main className="grid min-h-0 flex-1 grid-cols-[minmax(0,1fr)_45px] grid-rows-[minmax(0,1fr)_81px_20px] gap-y-px border-r-2 border-l-2 border-r-white border-l-[#a0a0a0] bg-black pt-[3px] pl-0.5 font-['DejaVu_Sans_Condensed','Liberation_Sans',sans-serif] text-[9px] leading-3 text-white">
      <section className="relative border border-white">
        <PricePlot />
        <div className="relative pt-0.5 pl-[3px]">
          <p className="flex items-center whitespace-pre">
            <svg width="8" height="4" viewBox="0 0 8 4" className="mr-1" aria-hidden="true"><path d="M0 0h8L4 4z" fill="#fff" /></svg>
            #DOW30,M1  26439.5 26440.5 26419.0 26428.0
          </p>
          <p>License OK!</p>
          <p>7/31/2020 12:00:00 AM</p>
        </div>
        <p className="absolute top-[189px] left-[7px]">#40298092 buy 0.04</p>
        <p className="absolute bottom-[18px] left-[7px]">#40365475 buy 0.01</p>
        <div className="absolute top-[10px] right-[10px] flex flex-col gap-[18px]">
          <DataPanel title="PFIndi Stats:" rows={STATS} />
          <DataPanel title="PFIndi WIN:" rows={WIN} />
        </div>
        <div className="absolute right-[10px] bottom-[11px]">
          <DataPanel title="PFIndi Recommends:" rows={RECOMMENDS} />
        </div>
        <div className="absolute bottom-[9px] left-[10px] flex flex-col">
          <p className="mb-10 border border-[#00ff7f] bg-black pt-0.5 text-center font-['DejaVu_Sans_Mono'] text-[11px] leading-4 font-bold text-[#00ff7f]">Item: Dow_Jones_1M</p>
          <DataPanel title="PFIndi Metrics" rows={METRICS} />
          <p className="mt-[3px] h-7 font-['DejaVu_Sans_Mono'] text-[22px] leading-7 text-[#c0c0c0]">PFindi.com</p>
        </div>
      </section>
      <div className="-mb-[3px] -ml-px flex flex-col justify-between pt-[13px]">
        {PRICES.map((p) => (
          <div key={p} className="flex h-3 items-center"><span className="mr-[3px] h-px w-[3px] bg-white" />{p}</div>
        ))}
      </div>
      <section className="relative border border-white">
        <svg className="absolute inset-0 h-full w-full" role="img" aria-label="PFIndi signal histogram">
          <g transform="translate(-5 -895)">
            <Bars runs={BUY_RUNS} y={899} h={35} color="#00ff7f" />
            <Bars runs={SELL_RUNS} y={934} h={37} color="#ff6347" />
            <path d="M5 969v5h5z" fill="#778899" />
          </g>
        </svg>
        <p className="relative pt-0.5 pl-1">PFIndi_1.65 169.9994 339.9987</p>
      </section>
      <div className="flex flex-col justify-between py-0.5 pl-[3px]">
        <span>1.1</span><span>0.00</span><span>-1.1</span>
      </div>
      <div className="col-span-2 flex overflow-hidden">
        {TIMES.map((t) => (
          <div key={t} className="w-16 shrink-0 whitespace-nowrap">
            <div className="ml-px h-0.5 w-px bg-white" />{t}
          </div>
        ))}
      </div>
    </main>
  );
}

const TABS = ['#DOW30,M1', 'GOLDm,M1', 'GOLDm,M5', 'GBPJPYm,M1', '#DOW30,M1', '#DOW30,M1'];

function ChartTabs() {
  return (
    <div className="flex h-[23px] shrink-0 items-stretch border-t-2 border-white text-[12px] leading-4">
      <div className="flex flex-1 items-stretch border-t border-black pb-px">
        {TABS.map((t, i) => (
          <button
            key={i}
            type="button"
            className={i === 5
              ? '-mt-px border-2 border-t-0 border-black bg-white px-2'
              : `mt-0.5 mb-1 px-2.5 leading-[14px] text-[#808080] ${i < 4 ? 'border-r border-[#808080]' : ''} ${i === 0 ? 'ml-1.5' : ''} ${i === 4 ? 'pr-3' : ''}`}
          >
            {t}
          </button>
        ))}
        <div className="mr-2 ml-auto flex items-center gap-[15px]">
          <button type="button" aria-label="Previous tabs"><Icon w={5} h={8}><path d="M4 0v8L0 4z" fill="#888" /></Icon></button>
          <button type="button" aria-label="Next tabs"><Icon w={5} h={8}><path d="M1 0v8l4-4z" fill="#888" /></Icon></button>
        </div>
      </div>
    </div>
  );
}

const StatusCell = ({ width, children }) => (
  <div className={`my-0.5 flex items-center border-l border-[#a0a0a0] pl-[5px] whitespace-nowrap ${width}`}>{children}</div>
);

function StatusBar() {
  return (
    <footer className="flex h-[22px] shrink-0 border-t border-white text-[12px] leading-4">
      <div className="flex flex-1 items-center pl-0.5">For Help, press F1</div>
      <StatusCell width="w-[116px]">British Pound</StatusCell>
      <StatusCell width="w-[102px]">2020.07.24 15:19</StatusCell>
      <StatusCell width="w-[71px]">O: 26590.5</StatusCell>
      <StatusCell width="w-[71px]">H: 26597.5</StatusCell>
      <StatusCell width="w-[68px]">L: 26581.0</StatusCell>
      <StatusCell width="w-[70px]">C: 26583.0</StatusCell>
      <StatusCell width="w-[66px]">V: 181</StatusCell>
      <StatusCell width="w-[130px]">
        <Icon w={24} h={13}>
          {Array.from({ length: 8 }, (_, i) => (
            <g key={i}>
              <rect x={i * 3} y="0" width="2" height={9 - i} fill="#6b7d10" />
              <rect x={i * 3} y={10 - i} width="2" height={3 + i} fill="#0f4a6b" />
            </g>
          ))}
        </Icon>
        <span className="ml-1">130234/63 kb</span>
      </StatusCell>
    </footer>
  );
}

export default function App() {
  return (
    <div className="flex h-screen flex-col overflow-hidden bg-[#f0f0f0] font-[Roboto,sans-serif] text-black">
      <TitleBar />
      <MenuBar />
      <MainToolbar />
      <DrawingToolbar />
      <Chart />
      <ChartTabs />
      <StatusBar />
    </div>
  );
}
